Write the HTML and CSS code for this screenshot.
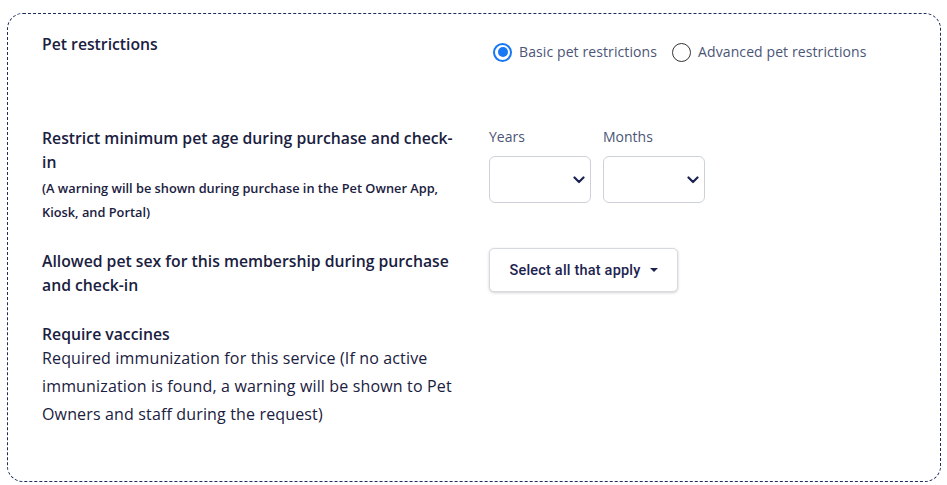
FILE: index.html
```html
<!DOCTYPE html>
<html>
<head>
<meta charset="utf-8">
<link rel="stylesheet" href="styles.css">
</head>
<body>
<div class="card">
  <div class="row row-top">
    <div class="left"><div class="title">Pet restrictions</div></div>
    <div class="right radios">
      <label class="radio"><span class="dot checked"></span><span>Basic pet restrictions</span></label>
      <label class="radio"><span class="dot"></span><span>Advanced pet restrictions</span></label>
    </div>
  </div>
  <div class="row row-age">
    <div class="left">
      <div class="label">Restrict minimum pet age during purchase and check-in</div>
      <div class="note">(A warning will be shown during purchase in the Pet Owner App, Kiosk, and Portal)</div>
    </div>
    <div class="right selects">
      <div class="field">
        <div class="field-label">Years</div>
        <div class="select"><svg width="12" height="8" viewBox="0 0 12 8"><path d="M1.5 1.5 L6 6 L10.5 1.5" fill="none" stroke="#1d2350" stroke-width="2.2" stroke-linecap="round" stroke-linejoin="round"/></svg></div>
      </div>
      <div class="field">
        <div class="field-label">Months</div>
        <div class="select"><svg width="12" height="8" viewBox="0 0 12 8"><path d="M1.5 1.5 L6 6 L10.5 1.5" fill="none" stroke="#1d2350" stroke-width="2.2" stroke-linecap="round" stroke-linejoin="round"/></svg></div>
      </div>
    </div>
  </div>
  <div class="row row-sex">
    <div class="left"><div class="label">Allowed pet sex for this membership during purchase and check-in</div></div>
    <div class="right"><button class="dropdown">Select all that apply <span class="caret"></span></button></div>
  </div>
  <div class="row row-vacc">
    <div class="left">
      <div class="label">Require vaccines</div>
      <div class="desc">Required immunization for this service (If no active immunization is found, a warning will be shown to Pet Owners and staff during the request)</div>
    </div>
  </div>
</div>
</body>
</html>
```

FILE: styles.css
```css
html, body { margin: 0; padding: 0; background: #fff; }
body { font-family: "Open Sans", "Liberation Sans", sans-serif; color: #1a2040; }
.card {
  margin: 13px 7px 0 7px;
  width: 934px;
  height: 469px;
  border: 1px dashed #1f2c5e;
  border-radius: 16px;
  box-sizing: border-box;
  padding: 18px 0 0 34px;
}
.row { display: grid; grid-template-columns: 447px 1fr; }
.left { padding-right: 28px; }
.title { font-size: 15.75px; font-weight: 600; line-height: 24px; }
.radios { display: flex; gap: 15px; padding: 8px 0 0 4px; align-items: center; }
.radio { display: flex; align-items: center; gap: 7px; font-size: 14px; letter-spacing: 0.1px; color: #4b5576; font-weight: 400; line-height: 24px; }
.dot { width: 19px; height: 19px; border: 1.5px solid #333; border-radius: 50%; box-sizing: border-box; display: inline-block; position: relative; }
.dot.checked { border: 2px solid #1877f2; }
.dot.checked::after { content: ""; position: absolute; left: 2.5px; top: 2.5px; width: 10px; height: 10px; border-radius: 50%; background: #1877f2; }
.row-age { margin-top: 62px; }
.label { font-size: 15.75px; font-weight: 600; line-height: 24px; }
.note { font-size: 12.8px; font-weight: 600; line-height: 24px; margin-top: 2px; }
.selects { display: flex; gap: 12px; }
.field-label { font-size: 14px; color: #4b5576; font-weight: 400; line-height: 24px; margin-top: -1px; }
.select { width: 102px; height: 47px; border: 1px solid #cdd2da; border-radius: 6px; box-sizing: border-box; margin-top: 7px; display: flex; align-items: center; justify-content: flex-end; padding-right: 5px; }
.row-sex { margin-top: 25px; }
.dropdown {
  margin-top: -1px;
  width: 189px; height: 44px;
  border: 1px solid #d6d9df; border-radius: 5px; background: #fff;
  box-shadow: 0 1px 3px rgba(0,0,0,0.18);
  font-family: Roboto, "Liberation Sans", sans-serif; font-weight: 500; font-size: 14.5px; letter-spacing: 0.2px; color: #1d2350;
  display: flex; align-items: center; justify-content: center; gap: 9px; padding: 0;
}
.caret { width: 0; height: 0; border-left: 4px solid transparent; border-right: 4px solid transparent; border-top: 4px solid #1d2350; }
.row-vacc { margin-top: 25px; }
.desc { font-size: 16px; line-height: 28px; font-weight: 400; letter-spacing: 0.15px; margin-top: -2px; }
```
